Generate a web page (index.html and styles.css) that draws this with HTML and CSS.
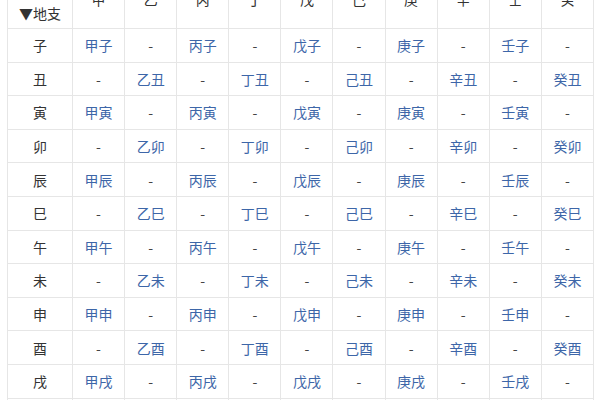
FILE: index.html
```html
<!DOCTYPE html>
<html lang="zh">
<head>
<meta charset="utf-8">
<link rel="stylesheet" href="styles.css">
</head>
<body>
<table class="ganzhi">
  <colgroup>
    <col class="col-head">
    <col class="col-stem"><col class="col-stem"><col class="col-stem"><col class="col-stem"><col class="col-stem">
    <col class="col-stem"><col class="col-stem"><col class="col-stem"><col class="col-stem"><col class="col-stem">
  </colgroup>
  <thead>
    <tr class="head-row">
      <th class="corner"><span class="corner-top">天干▶</span><span class="corner-bottom">▼地支</span></th>
      <th>甲</th><th>乙</th><th>丙</th><th>丁</th><th>戊</th><th>己</th><th>庚</th><th>辛</th><th>壬</th><th>癸</th>
    </tr>
  </thead>
  <tbody>
    <tr><th>子</th><td><a>甲子</a></td><td>-</td><td><a>丙子</a></td><td>-</td><td><a>戊子</a></td><td>-</td><td><a>庚子</a></td><td>-</td><td><a>壬子</a></td><td>-</td></tr>
    <tr><th>丑</th><td>-</td><td><a>乙丑</a></td><td>-</td><td><a>丁丑</a></td><td>-</td><td><a>己丑</a></td><td>-</td><td><a>辛丑</a></td><td>-</td><td><a>癸丑</a></td></tr>
    <tr><th>寅</th><td><a>甲寅</a></td><td>-</td><td><a>丙寅</a></td><td>-</td><td><a>戊寅</a></td><td>-</td><td><a>庚寅</a></td><td>-</td><td><a>壬寅</a></td><td>-</td></tr>
    <tr><th>卯</th><td>-</td><td><a>乙卯</a></td><td>-</td><td><a>丁卯</a></td><td>-</td><td><a>己卯</a></td><td>-</td><td><a>辛卯</a></td><td>-</td><td><a>癸卯</a></td></tr>
    <tr><th>辰</th><td><a>甲辰</a></td><td>-</td><td><a>丙辰</a></td><td>-</td><td><a>戊辰</a></td><td>-</td><td><a>庚辰</a></td><td>-</td><td><a>壬辰</a></td><td>-</td></tr>
    <tr><th>巳</th><td>-</td><td><a>乙巳</a></td><td>-</td><td><a>丁巳</a></td><td>-</td><td><a>己巳</a></td><td>-</td><td><a>辛巳</a></td><td>-</td><td><a>癸巳</a></td></tr>
    <tr><th>午</th><td><a>甲午</a></td><td>-</td><td><a>丙午</a></td><td>-</td><td><a>戊午</a></td><td>-</td><td><a>庚午</a></td><td>-</td><td><a>壬午</a></td><td>-</td></tr>
    <tr><th>未</th><td>-</td><td><a>乙未</a></td><td>-</td><td><a>丁未</a></td><td>-</td><td><a>己未</a></td><td>-</td><td><a>辛未</a></td><td>-</td><td><a>癸未</a></td></tr>
    <tr><th>申</th><td><a>甲申</a></td><td>-</td><td><a>丙申</a></td><td>-</td><td><a>戊申</a></td><td>-</td><td><a>庚申</a></td><td>-</td><td><a>壬申</a></td><td>-</td></tr>
    <tr><th>酉</th><td>-</td><td><a>乙酉</a></td><td>-</td><td><a>丁酉</a></td><td>-</td><td><a>己酉</a></td><td>-</td><td><a>辛酉</a></td><td>-</td><td><a>癸酉</a></td></tr>
    <tr><th>戌</th><td><a>甲戌</a></td><td>-</td><td><a>丙戌</a></td><td>-</td><td><a>戊戌</a></td><td>-</td><td><a>庚戌</a></td><td>-</td><td><a>壬戌</a></td><td>-</td></tr>
    <tr><th>亥</th><td>-</td><td><a>乙亥</a></td><td>-</td><td><a>丁亥</a></td><td>-</td><td><a>己亥</a></td><td>-</td><td><a>辛亥</a></td><td>-</td><td><a>癸亥</a></td></tr>
  </tbody>
</table>
</body>
</html>
```
FILE: styles.css
```css
html, body {
  margin: 0;
  padding: 0;
  background: #ffffff;
}
body {
  font-family: "Noto Sans CJK SC", "Noto Sans CJK JP", sans-serif;
  font-size: 14px;
  color: #333333;
  overflow: hidden;
}
.ganzhi {
  margin: -32px 0 0 7px;
  border-collapse: collapse;
  table-layout: fixed;
  width: 586px;
  background: #ffffff;
}
.col-head {
  width: 65px;
}
.col-stem {
  width: 52.1px;
}
.ganzhi th,
.ganzhi td {
  border: 1px solid #e6e6e6;
  padding: 0;
  text-align: center;
  vertical-align: middle;
  font-weight: normal;
  line-height: 20px;
  white-space: nowrap;
}
.ganzhi tbody tr {
  height: 33.6px;
}
.head-row {
  height: 60px;
}
.ganzhi th.corner {
  vertical-align: bottom;
  padding-bottom: 5px;
}
.corner-top,
.corner-bottom {
  display: block;
}
.corner-top {
  margin-bottom: 8px;
}
.ganzhi td {
  color: #444444;
}
.ganzhi a {
  color: #3d66a8;
  text-decoration: none;
}
```
